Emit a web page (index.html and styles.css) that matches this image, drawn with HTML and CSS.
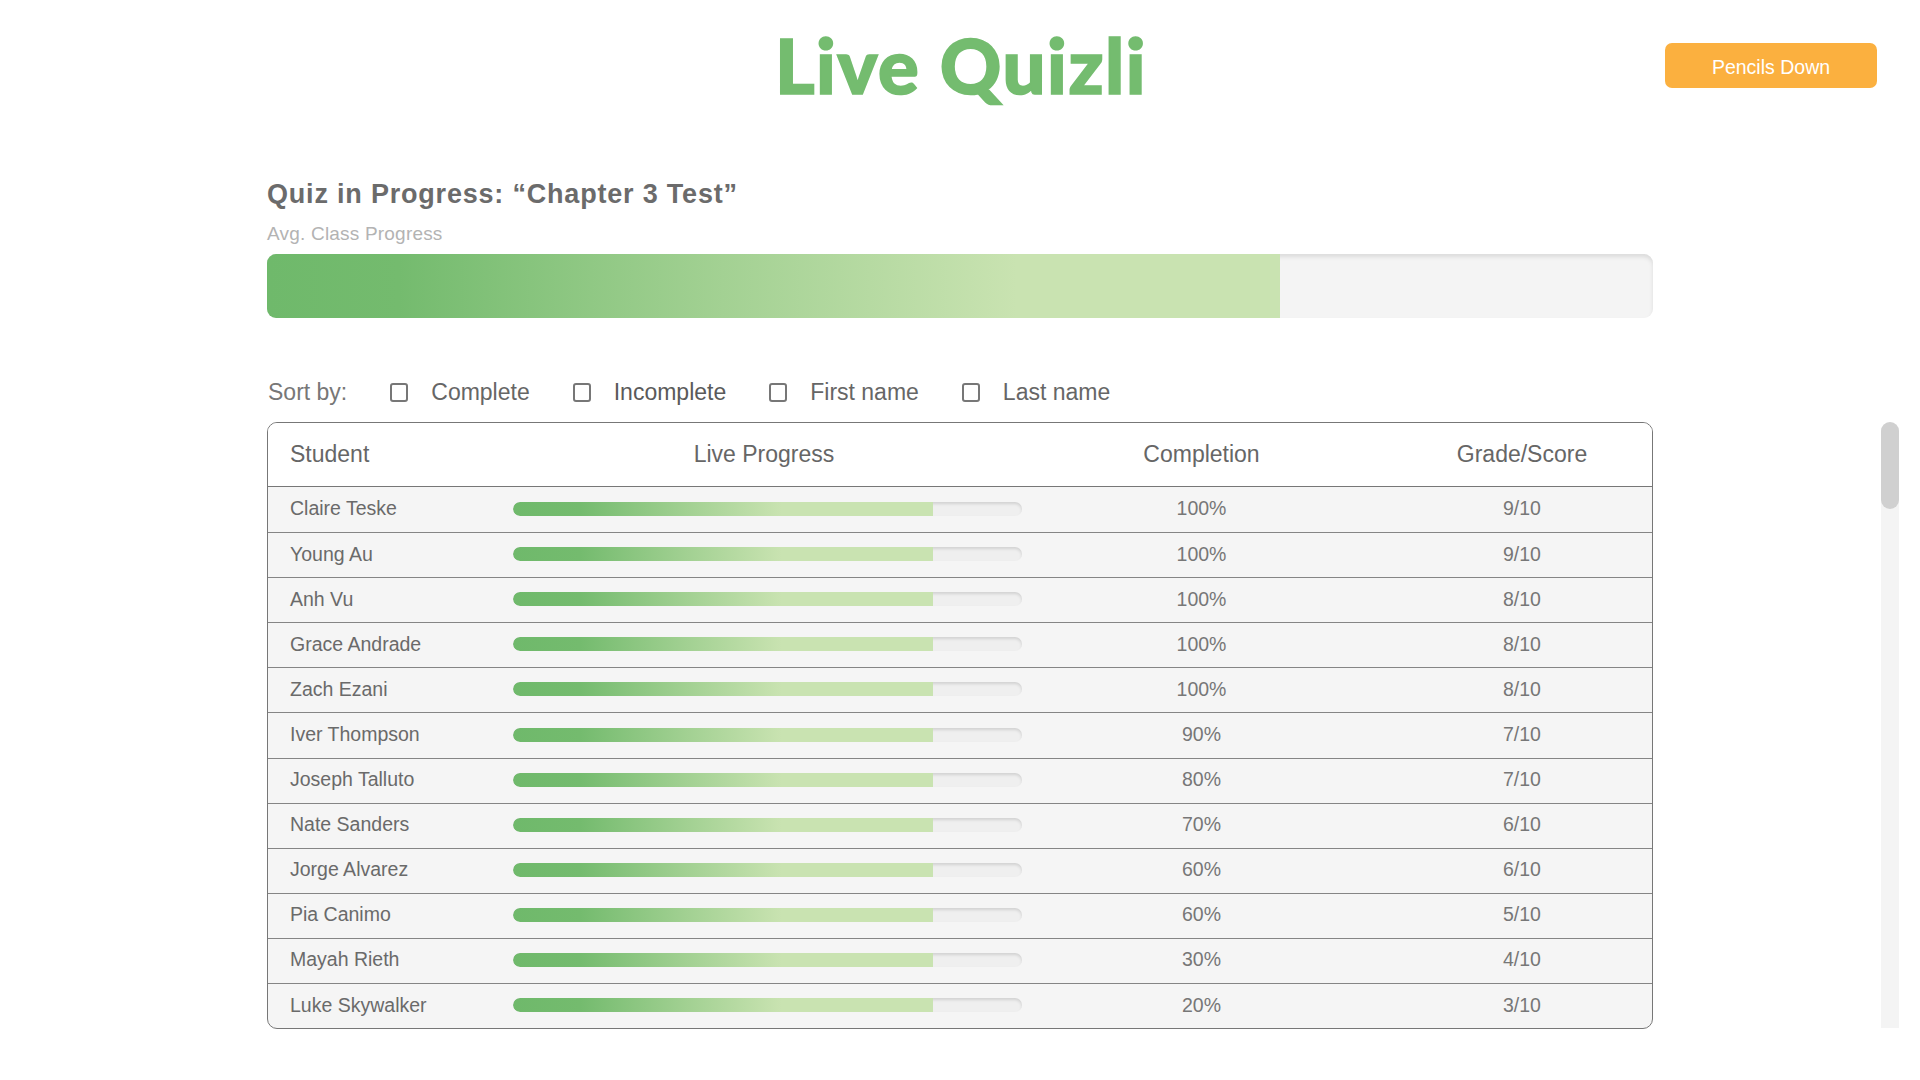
FILE: index.html
```html
<!DOCTYPE html>
<html lang="en">
<head>
<meta charset="utf-8">
<title>Live Quizli</title>
<link rel="stylesheet" href="styles.css">
</head>
<body>
<header class="topbar">
  <div class="spacer"></div>
  <h1 class="brand">Live Quizli</h1>
  <div class="actions"><button class="pencils">Pencils Down</button></div>
</header>

<main class="content">
  <h2 class="quiz-title">Quiz in Progress: “Chapter 3 Test”</h2>
  <div class="avg-label">Avg. Class Progress</div>
  <div class="avg-bar"><div class="avg-fill"></div></div>

  <div class="sort-row">
    <span class="sort-label">Sort by:</span>
    <label class="sort-opt"><span class="box"></span>Complete</label>
    <label class="sort-opt strong"><span class="box"></span>Incomplete</label>
    <label class="sort-opt"><span class="box"></span>First name</label>
    <label class="sort-opt"><span class="box"></span>Last name</label>
  </div>

  <div class="table">
    <div class="row head">
      <div class="c-name">Student</div>
      <div class="c-center c-live">Live Progress</div>
      <div class="c-center">Completion</div>
      <div class="c-center c-grade">Grade/Score</div>
    </div>
    <div class="row"><div class="c-name">Claire Teske</div><div class="c-bar"><div class="track"><div class="fill"></div></div></div><div class="c-center">100%</div><div class="c-center c-grade">9/10</div></div>
    <div class="row"><div class="c-name">Young Au</div><div class="c-bar"><div class="track"><div class="fill"></div></div></div><div class="c-center">100%</div><div class="c-center c-grade">9/10</div></div>
    <div class="row"><div class="c-name">Anh Vu</div><div class="c-bar"><div class="track"><div class="fill"></div></div></div><div class="c-center">100%</div><div class="c-center c-grade">8/10</div></div>
    <div class="row"><div class="c-name">Grace Andrade</div><div class="c-bar"><div class="track"><div class="fill"></div></div></div><div class="c-center">100%</div><div class="c-center c-grade">8/10</div></div>
    <div class="row"><div class="c-name">Zach Ezani</div><div class="c-bar"><div class="track"><div class="fill"></div></div></div><div class="c-center">100%</div><div class="c-center c-grade">8/10</div></div>
    <div class="row"><div class="c-name">Iver Thompson</div><div class="c-bar"><div class="track"><div class="fill"></div></div></div><div class="c-center">90%</div><div class="c-center c-grade">7/10</div></div>
    <div class="row"><div class="c-name">Joseph Talluto</div><div class="c-bar"><div class="track"><div class="fill"></div></div></div><div class="c-center">80%</div><div class="c-center c-grade">7/10</div></div>
    <div class="row"><div class="c-name">Nate Sanders</div><div class="c-bar"><div class="track"><div class="fill"></div></div></div><div class="c-center">70%</div><div class="c-center c-grade">6/10</div></div>
    <div class="row"><div class="c-name">Jorge Alvarez</div><div class="c-bar"><div class="track"><div class="fill"></div></div></div><div class="c-center">60%</div><div class="c-center c-grade">6/10</div></div>
    <div class="row"><div class="c-name">Pia Canimo</div><div class="c-bar"><div class="track"><div class="fill"></div></div></div><div class="c-center">60%</div><div class="c-center c-grade">5/10</div></div>
    <div class="row"><div class="c-name">Mayah Rieth</div><div class="c-bar"><div class="track"><div class="fill"></div></div></div><div class="c-center">30%</div><div class="c-center c-grade">4/10</div></div>
    <div class="row"><div class="c-name">Luke Skywalker</div><div class="c-bar"><div class="track"><div class="fill"></div></div></div><div class="c-center">20%</div><div class="c-center c-grade">3/10</div></div>
  </div>
</main>

<div class="scrollbar"><div class="thumb"></div></div>
</body>
</html>
```

FILE: styles.css
```css
html, body {
  margin: 0;
  padding: 0;
  background: #ffffff;
}
body {
  font-family: "Liberation Sans", Arial, sans-serif;
  color: #666666;
  width: 1920px;
  height: 1080px;
  overflow: hidden;
  position: relative;
}

.topbar {
  display: grid;
  grid-template-columns: 1fr auto 1fr;
  align-items: start;
  padding-top: 27px;
  height: 76px;
}
.brand {
  margin: 0 0 0 2px;
  font-family: Lato, "Noto Sans", sans-serif;
  font-weight: 900;
  font-size: 76px;
  line-height: 76px;
  color: #74bc6f;
  letter-spacing: 1.5px;
  -webkit-text-stroke: 1.6px #74bc6f;
}
.actions {
  display: flex;
  justify-content: flex-end;
  padding-right: 43px;
}
.pencils {
  margin-top: 16px;
  width: 212px;
  height: 45px;
  border: none;
  border-radius: 7px;
  background: #fbb03f;
  color: #ffffff;
  font-family: "Liberation Sans", Arial, sans-serif;
  font-size: 19.5px;
  padding: 3px 0 0 0;
}

.content {
  width: 1386px;
  margin: 0 auto;
  padding-top: 76px;
}
.quiz-title {
  margin: 0;
  font-size: 27px;
  line-height: 31px;
  font-weight: 700;
  color: #6b6b6b;
  letter-spacing: 0.8px;
}
.avg-label {
  margin-top: 13px;
  font-size: 19px;
  line-height: 22px;
  color: #b3b3b3;
  letter-spacing: 0.2px;
}
.avg-bar {
  margin-top: 9px;
  height: 64px;
  border-radius: 9px;
  background: #f4f4f4;
  box-shadow: inset 0 3px 4px rgba(0, 0, 0, 0.10);
  overflow: hidden;
}
.avg-fill {
  width: 73.1%;
  height: 100%;
  background: linear-gradient(90deg, #6fb96b 0%, #74bb6e 13%, #a3d193 45%, #c9e3b1 74%, #c9e3b1 100%);
}

.sort-row {
  margin-top: 61px;
  height: 26px;
  display: flex;
  align-items: center;
  gap: 43px;
  font-size: 23px;
  line-height: 26px;
  letter-spacing: 0;
  padding-left: 1px;
}
.sort-label {
  color: #777777;
}
.sort-opt {
  display: flex;
  align-items: center;
  gap: 23px;
  color: #666666;
}
.sort-opt.strong {
  color: #5a5a5a;
}
.box {
  width: 14px;
  height: 15px;
  border: 2.5px solid #777777;
  border-radius: 3px;
  display: inline-block;
}

.table {
  margin-top: 17px;
  border: 1px solid #777777;
  border-radius: 10px;
  overflow: hidden;
  background: #f5f5f5;
}
.row {
  display: grid;
  grid-template-columns: 245px 509px 359px 1fr;
  align-items: center;
  height: 45.1px;
  font-size: 19.5px;
  color: #6a6a6a;
  border-top: 1px solid #858585;
  box-sizing: border-box;
  padding-bottom: 2px;
}
.row.head {
  height: 64px;
  background: #ffffff;
  border-top: none;
  border-bottom: 1px solid #777777;
  font-size: 23px;
  color: #666666;
  padding-bottom: 0;
}
.row.head + .row {
  border-top: none;
}
.c-name {
  padding-left: 22px;
  white-space: nowrap;
}
.c-center {
  text-align: center;
  color: #777777;
}
.c-live {
  padding-right: 7px;
}
.c-grade {
  padding-left: 11px;
}
.row.head .c-center {
  color: #666666;
}
.c-bar {
  display: flex;
  align-items: center;
}
.track {
  width: 100%;
  height: 14px;
  border-radius: 7px;
  background: #efefef;
  box-shadow: inset 0 2px 3px rgba(0, 0, 0, 0.12);
  overflow: hidden;
}
.fill {
  width: 82.5%;
  height: 100%;
  border-radius: 7px 0 0 7px;
  background: linear-gradient(90deg, #6fb96b 0%, #74bb6e 16%, #a3d193 42%, #c9e3b1 64%, #c9e3b1 100%);
}

.scrollbar {
  position: absolute;
  top: 422px;
  right: 21px;
  width: 18px;
  height: 606px;
  background: #f4f4f4;
  border-radius: 9px 9px 0 0;
}
.thumb {
  height: 87px;
  border-radius: 9px;
  background: #d0d0d0;
}
```
